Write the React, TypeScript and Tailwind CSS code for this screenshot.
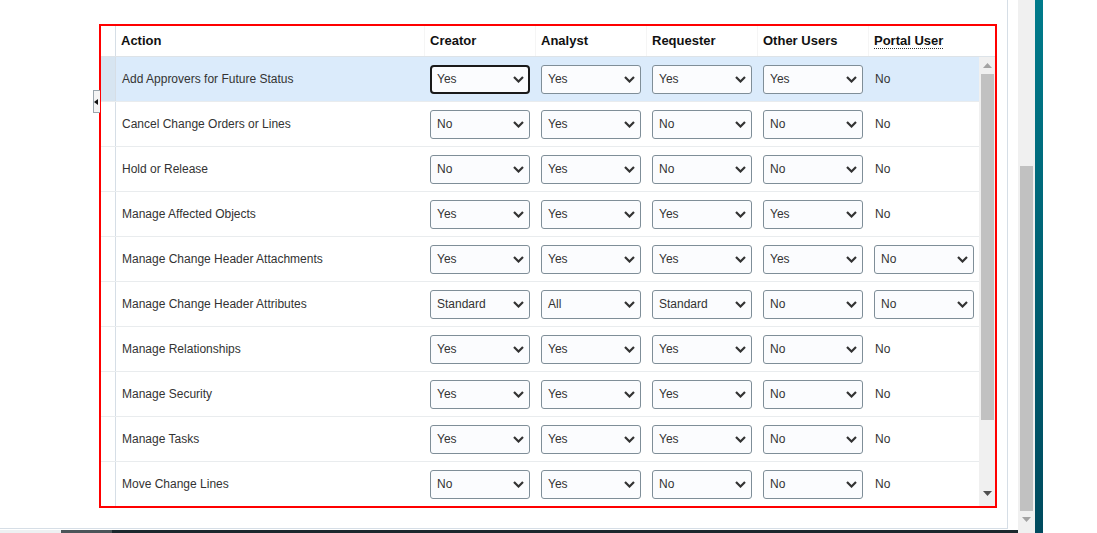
type Row = { label: string; values: string[]; portal: string; portalSelect?: boolean }

const rows: Row[] = [
  { label: 'Add Approvers for Future Status', values: ['Yes', 'Yes', 'Yes', 'Yes'], portal: 'No' },
  { label: 'Cancel Change Orders or Lines', values: ['No', 'Yes', 'No', 'No'], portal: 'No' },
  { label: 'Hold or Release', values: ['No', 'Yes', 'No', 'No'], portal: 'No' },
  { label: 'Manage Affected Objects', values: ['Yes', 'Yes', 'Yes', 'Yes'], portal: 'No' },
  { label: 'Manage Change Header Attachments', values: ['Yes', 'Yes', 'Yes', 'Yes'], portal: 'No', portalSelect: true },
  { label: 'Manage Change Header Attributes', values: ['Standard', 'All', 'Standard', 'No'], portal: 'No', portalSelect: true },
  { label: 'Manage Relationships', values: ['Yes', 'Yes', 'Yes', 'No'], portal: 'No' },
  { label: 'Manage Security', values: ['Yes', 'Yes', 'Yes', 'No'], portal: 'No' },
  { label: 'Manage Tasks', values: ['Yes', 'Yes', 'Yes', 'No'], portal: 'No' },
  { label: 'Move Change Lines', values: ['No', 'Yes', 'No', 'No'], portal: 'No' },
]

const headers = ['Creator', 'Analyst', 'Requester', 'Other Users']

function Chevron() {
  return (
    <svg width="11" height="7" viewBox="0 0 11 7" className="shrink-0">
      <polyline points="1,1 5.5,5.5 10,1" fill="none" stroke="#333" strokeWidth="2.2" />
    </svg>
  )
}

// fake select box, same look as the page's native dropdowns
function Select({ value, focused }: { value: string; focused?: boolean }) {
  return (
    <div
      className={
        focused
          ? 'flex h-[29px] w-[100px] items-center justify-between rounded-[4px] border-2 border-[#1a1a1a] bg-[#fbfcfe] pl-[5px] pr-[4px]'
          : 'flex h-[29px] w-[100px] items-center justify-between rounded-[3px] border border-[#7f8e98] bg-[#fbfcfe] pl-[6px] pr-[5px]'
      }
    >
      <span className="text-[12px] text-[#333]">{value}</span>
      <Chevron />
    </div>
  )
}

function Arrow({ up, color }: { up?: boolean; color: string }) {
  return (
    <svg width="9" height="5" viewBox="0 0 9 5">
      <polygon points={up ? '0,5 4.5,0 9,5' : '0,0 9,0 4.5,5'} fill={color} />
    </svg>
  )
}

export default function App() {
  return (
    <div className="flex h-[533px] w-full overflow-hidden bg-white font-['Liberation_Sans',Arial,sans-serif]">
      {/* main area */}
      <div className="flex w-[1018px] shrink-0 flex-col">
        <div className="relative h-[529px] w-[1008px] border-r border-b border-[#d6dee6] pt-[24px] pl-[99px]">
          {/* collapse handle */}
          <div className="absolute left-[93px] top-[90px] flex h-[23px] w-[7px] items-center justify-start border border-r-0 border-[#9aa5ad] bg-[#f4f4f4]">
            <svg width="4" height="6" viewBox="0 0 4 6">
              <polygon points="4,0 4,6 0,3" fill="#111" />
            </svg>
          </div>

          <div className="flex h-[484px] w-[898px] flex-col overflow-hidden border-2 border-[#ff0000]">
            {/* header */}
            <div className="flex h-[31px] shrink-0 border-b border-[#dde3e8] text-[13px] font-bold text-[#111]">
              <div className="w-[15px] shrink-0 border-r border-[#d6dee6]" />
              <div className="flex w-[308px] shrink-0 items-center pl-[5px]">Action</div>
              {headers.map((h) => (
                <div key={h} className="flex w-[111px] shrink-0 items-center border-l border-[#f5f5f5] pl-[5px]">
                  {h}
                </div>
              ))}
              <div className="flex w-[111px] shrink-0 items-center border-l border-[#f5f5f5] pl-[5px]">
                <span className="border-b border-dotted border-[#333] leading-[15px]">Portal User</span>
              </div>
              <div className="flex-1" />
            </div>

            {/* body */}
            <div className="flex flex-1 overflow-hidden">
              <div className="w-[878px] shrink-0">
                {rows.map((r, i) => (
                  <div
                    key={r.label}
                    className={
                      i === 0
                        ? 'flex h-[45px] border-b border-[#e9ecee] bg-[#dbebfb]'
                        : 'flex h-[45px] border-b border-[#e9ecee] bg-white'
                    }
                  >
                    <div
                      className={
                        i === 0
                          ? 'w-[15px] shrink-0 border-r border-[#d6dee6] bg-[#d7e5f1]'
                          : 'w-[15px] shrink-0 border-r border-[#d6dee6]'
                      }
                    />
                    <div className="flex w-[308px] shrink-0 items-center pl-[6px] text-[12px] text-[#333]">
                      {r.label}
                    </div>
                    {r.values.map((v, j) => (
                      <div key={j} className="flex w-[111px] shrink-0 items-center pl-[6px]">
                        <Select value={v} focused={i === 0 && j === 0} />
                      </div>
                    ))}
                    <div className="flex w-[111px] shrink-0 items-center pl-[6px] text-[12px] text-[#333]">
                      {r.portalSelect ? <Select value={r.portal} /> : <span className="pl-[1px]">{r.portal}</span>}
                    </div>
                  </div>
                ))}
              </div>

              {/* inner scrollbar */}
              <div className="flex w-[16px] shrink-0 flex-col items-center bg-[#f0f0f0]">
                <div className="flex h-[17px] items-center">
                  <Arrow up color="#a3a3a3" />
                </div>
                <div className="h-[346px] w-[13px] bg-[#c1c1c1]" />
                <div className="flex-1" />
                <div className="flex h-[15px] items-start">
                  <Arrow color="#505050" />
                </div>
              </div>
            </div>
          </div>
        </div>
        <div className="h-[1px]" />
        <div className="flex h-[3px]">
          <div className="w-[61px] bg-[#eef1f2]" />
          <div className="w-[51px] bg-[#4b5559]" />
          <div className="flex-1 bg-[#1b282d]" />
        </div>
      </div>

      {/* outer scrollbar */}
      <div className="flex w-[17px] shrink-0 flex-col items-center bg-[#f0f0f0]">
        <div className="h-[166px]" />
        <div className="h-[345px] w-[13px] bg-[#c1c1c1]" />
        <div className="flex h-[17px] items-center">
          <Arrow color="#a3a3a3" />
        </div>
      </div>

      {/* teal strip */}
      <div className="w-[8px] shrink-0 bg-gradient-to-b from-[#007b8b] to-[#004a5e]" />
      <div className="flex-1 bg-white" />
    </div>
  )
}
